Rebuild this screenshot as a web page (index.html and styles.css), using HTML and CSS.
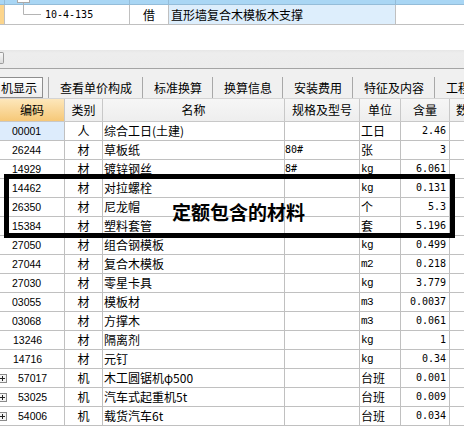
FILE: index.html
```html
<!DOCTYPE html>
<html lang="zh-CN">
<head>
<meta charset="utf-8">
<title>定额材料</title>
<link rel="stylesheet" href="styles.css">
</head>
<body>
<div class="page">
  <div class="tree">
    <div class="trow trow-sel">
      <div class="strip"></div><div></div><div></div><div></div><div class="last"></div>
    </div>
    <div class="trow trow-main">
      <div class="strip orange"></div>
      <div class="tcode asc">10-4-135</div>
      <div class="tjie">借</div>
      <div class="tname">直形墙复合木模板木支撑</div>
      <div class="last"></div>
    </div>
    <svg class="tree-lines" width="50" height="25" viewBox="0 0 50 25">
      <rect x="17.5" y="-6.5" width="12" height="9" fill="#fff" stroke="#a8a8a8"/>
      <path d="M23.5 3 V14.5 H41" fill="none" stroke="#b4b4b4"/>
    </svg>
  </div>

  <div class="spacer"></div>
  <div class="hscroll"><span class="sb-btn"></span></div>

  <div class="tabs">
    <span class="tab-btn">机显示</span>
    <span class="sep"></span>
    <span class="tab">查看单价构成</span>
    <span class="sep"></span>
    <span class="tab">标准换算</span>
    <span class="sep"></span>
    <span class="tab">换算信息</span>
    <span class="sep"></span>
    <span class="tab">安装费用</span>
    <span class="sep"></span>
    <span class="tab">特征及内容</span>
    <span class="sep"></span>
    <span class="tab">工程量明细</span>
  </div>

  <div class="grid">
    <div class="row head">
      <div class="hl">编码</div><div>类别</div><div>名称</div><div>规格及型号</div><div>单位</div><div>含量</div><div class="hlast">数量</div>
    </div>
    <div class="row"><div class="c sel">00001</div><div class="k">人</div><div class="n">综合工日(土建)</div><div class="s"></div><div class="u">工日</div><div class="q">2.46</div><div class="e"></div></div>
    <div class="row"><div class="c">26244</div><div class="k">材</div><div class="n">草板纸</div><div class="s asc">80#</div><div class="u">张</div><div class="q">3</div><div class="e"></div></div>
    <div class="row"><div class="c">14929</div><div class="k">材</div><div class="n">镀锌钢丝</div><div class="s asc">8#</div><div class="u ua">kg</div><div class="q">6.061</div><div class="e"></div></div>
    <div class="row"><div class="c">14462</div><div class="k">材</div><div class="n">对拉螺栓</div><div class="s"></div><div class="u ua">kg</div><div class="q">0.131</div><div class="e"></div></div>
    <div class="row"><div class="c">26350</div><div class="k">材</div><div class="n">尼龙帽</div><div class="s"></div><div class="u">个</div><div class="q">5.3</div><div class="e"></div></div>
    <div class="row"><div class="c">15384</div><div class="k">材</div><div class="n">塑料套管</div><div class="s"></div><div class="u">套</div><div class="q">5.196</div><div class="e"></div></div>
    <div class="row"><div class="c">27050</div><div class="k">材</div><div class="n">组合钢模板</div><div class="s"></div><div class="u ua">kg</div><div class="q">0.499</div><div class="e"></div></div>
    <div class="row"><div class="c">27044</div><div class="k">材</div><div class="n">复合木模板</div><div class="s"></div><div class="u ua">m2</div><div class="q">0.218</div><div class="e"></div></div>
    <div class="row"><div class="c">27030</div><div class="k">材</div><div class="n">零星卡具</div><div class="s"></div><div class="u ua">kg</div><div class="q">3.779</div><div class="e"></div></div>
    <div class="row"><div class="c">03055</div><div class="k">材</div><div class="n">模板材</div><div class="s"></div><div class="u ua">m3</div><div class="q">0.0037</div><div class="e"></div></div>
    <div class="row"><div class="c">03068</div><div class="k">材</div><div class="n">方撑木</div><div class="s"></div><div class="u ua">m3</div><div class="q">0.061</div><div class="e"></div></div>
    <div class="row"><div class="c ci">13246</div><div class="k">材</div><div class="n">隔离剂</div><div class="s"></div><div class="u ua">kg</div><div class="q">1</div><div class="e"></div></div>
    <div class="row"><div class="c ci">14716</div><div class="k">材</div><div class="n">元钉</div><div class="s"></div><div class="u ua">kg</div><div class="q">0.34</div><div class="e"></div></div>
    <div class="row"><div class="c cx"><svg class="plus" width="9" height="9" viewBox="0 0 9 9"><rect x="0.5" y="0.5" width="8" height="8" fill="#f4f4f4" stroke="#8a8a8a"/><path d="M2 4.5 H7 M4.5 2 V7" stroke="#222"/></svg>57017</div><div class="k">机</div><div class="n">木工圆锯机φ500</div><div class="s"></div><div class="u">台班</div><div class="q">0.001</div><div class="e"></div></div>
    <div class="row"><div class="c cx"><svg class="plus" width="9" height="9" viewBox="0 0 9 9"><rect x="0.5" y="0.5" width="8" height="8" fill="#f4f4f4" stroke="#8a8a8a"/><path d="M2 4.5 H7 M4.5 2 V7" stroke="#222"/></svg>53025</div><div class="k">机</div><div class="n">汽车式起重机5t</div><div class="s"></div><div class="u">台班</div><div class="q">0.009</div><div class="e"></div></div>
    <div class="row"><div class="c cx"><svg class="plus" width="9" height="9" viewBox="0 0 9 9"><rect x="0.5" y="0.5" width="8" height="8" fill="#f4f4f4" stroke="#8a8a8a"/><path d="M2 4.5 H7 M4.5 2 V7" stroke="#222"/></svg>54006</div><div class="k">机</div><div class="n">载货汽车6t</div><div class="s"></div><div class="u">台班</div><div class="q">0.034</div><div class="e"></div></div>
  </div>

  <div class="callout"></div>
  <div class="callout-text">定额包含的材料</div>
</div>
</body>
</html>
```

FILE: styles.css
```css
html, body {
  margin: 0;
  padding: 0;
  background: #fff;
}
body {
  width: 464px;
  height: 428px;
  overflow: hidden;
  font-family: "Noto Sans CJK SC", "Liberation Sans", sans-serif;
  font-size: 12px;
  color: #000;
}
.page {
  position: relative;
  width: 464px;
  height: 428px;
  overflow: hidden;
}

/* top tree rows */
.tree {
  position: relative;
}
.trow {
  display: grid;
  grid-template-columns: 5px 125px 39px 227px 1fr;
}
.trow > div {
  box-sizing: border-box;
  border-right: 1px solid #c0c0c0;
  border-bottom: 1px solid #c0c0c0;
  white-space: nowrap;
  overflow: hidden;
}
.trow > .last {
  border-right: none;
}
.trow-sel {
  height: 5px;
  background: #a9d6f4;
}
.trow-sel > div {
  border-color: #94bcd8;
}
.trow-main {
  height: 20px;
  line-height: 19px;
}
.strip.orange {
  background: #fcd58c;
}
.asc {
  font-family: "DejaVu Sans Mono", "Liberation Mono", monospace;
  font-size: 10px;
}
.tcode {
  padding-left: 40px;
}
.tjie {
  text-align: center;
}
.tname {
  background: #ddeefc;
  padding-left: 2px;
}
.tree-lines {
  position: absolute;
  left: 0;
  top: 0;
}

.spacer {
  height: 25px;
}
.hscroll {
  height: 18px;
  background: linear-gradient(#e6e6e6, #ededed 3px, #ececec);
  border-bottom: 1px solid #a4a4a4;
  display: flex;
  align-items: flex-start;
}
.sb-btn {
  display: block;
  box-sizing: border-box;
  width: 4px;
  height: 12px;
  margin-top: 2px;
  border: 1px solid #9c9c9c;
  border-left: none;
  border-radius: 0 2px 2px 0;
  background: linear-gradient(#f8f8f8, #dcdcdc);
}

/* tab bar */
.tabs {
  height: 29px;
  box-sizing: content-box;
  background: #f0f0f0;
  border-bottom: 1px solid #d4d4d4;
  padding-top: 0;
  display: flex;
  align-items: flex-start;
  white-space: nowrap;
  overflow: hidden;
}
.tabs > span {
  margin-top: 8px;
  height: 21px;
  line-height: 21px;
  flex: none;
}
.tab-btn {
  box-sizing: border-box;
  margin-left: -4px;
  margin-right: 5px;
  padding: 0 5px 0 4px;
  border: 1px solid #8e8e8e;
  line-height: 19px !important;
  background: linear-gradient(#fdfdfd, #eeeeee);
}
.sep {
  width: 1px;
  background: #a8a8a8;
}
.tab {
  padding: 0 10px 0 11px;
}

/* grid */
.row {
  display: grid;
  grid-template-columns: 65px 38px 182px 75px 41px 49px 1fr;
  height: 19px;
}
.row > div {
  box-sizing: border-box;
  border-right: 1px solid #c0c0c0;
  border-bottom: 1px solid #c0c0c0;
  line-height: 18px;
  white-space: nowrap;
  overflow: hidden;
}
.row > .e,
.row > .hlast {
  border-right: none;
}
.head {
  height: 23px;
}
.head > div {
  background: linear-gradient(#f6f6f6, #eeeeee);
  border-color: #c8c8c8;
  line-height: 22px;
  text-align: center;
}
.head > .hl {
  background: linear-gradient(#fde7bb, #f6c878);
}
.head > .hlast {
  text-align: left;
  padding-left: 6px;
}
.c {
  font-family: "Liberation Sans", sans-serif;
  font-size: 10.5px;
  padding-left: 12px;
}
.c.ci {
  padding-left: 13px;
}
.c.sel {
  background: #ddecfc;
}
.c.cx {
  padding-left: 0;
  display: flex;
  align-items: center;
}
.plus {
  flex: none;
  margin-left: -2px;
  margin-right: 11px;
}
.k {
  text-align: center;
}
.n {
  padding-left: 1px;
}
.s {
  padding-left: 0;
}
.u {
  padding-left: 1px;
}
.u.ua {
  font-family: "Liberation Mono", monospace;
  font-size: 11px;
  letter-spacing: -0.6px;
}
.q {
  text-align: right;
  padding-right: 3px;
  font-family: "DejaVu Sans Mono", monospace;
  font-size: 10px;
}

/* annotation overlay */
.callout {
  position: absolute;
  left: 4px;
  top: 174px;
  width: 451px;
  height: 64px;
  box-sizing: border-box;
  border: 5px solid #000;
}
.callout-text {
  position: absolute;
  left: 172px;
  top: 202px;
  font-family: "Noto Sans CJK SC", sans-serif;
  font-weight: bold;
  font-size: 19px;
  line-height: 19px;
  white-space: nowrap;
}
```
